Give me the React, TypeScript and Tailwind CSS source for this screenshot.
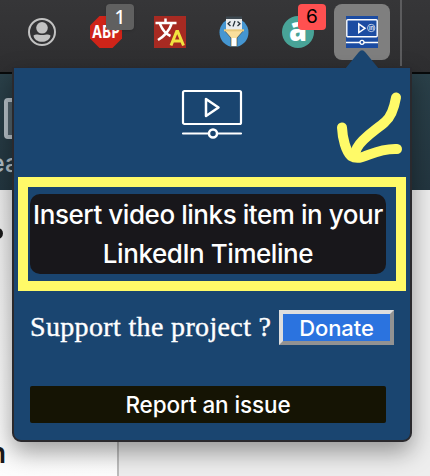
import type { ReactNode } from "react";

function Cell({ children }: { children: ReactNode }) {
  return <div className="relative flex h-14 w-16 shrink-0 items-center justify-center">{children}</div>;
}

function Toolbar() {
  return (
    <div className="flex h-[74px] w-full shrink-0 border-b-2 border-[#080a0b] bg-gradient-to-b from-[#363638] to-[#2e2e30] pl-[10px] pt-1">
      <Cell>
        <svg width="28" height="28" viewBox="0 0 28 28">
          <circle cx="14" cy="14" r="13" fill="none" stroke="#c2c2c2" strokeWidth="2" />
          <circle cx="14" cy="9.8" r="5.8" fill="#c2c2c2" />
          <path d="M5.500 17.500C8 15.500 10 17 14 17s6-1.500 8.500.500C22 21.500 18.300 23.800 14 23.800S6 21.500 5.500 17.500Z" fill="#c2c2c2" />
        </svg>
      </Cell>
      <Cell>
        <svg width="32" height="32" viewBox="0 0 32 32">
          <path d="M9.500 0h13L32 9.500v13L22.500 32h-13L0 22.500v-13Z" fill="#cf2419" />
          <text x="2.300" y="22.200" textLength="27.500" lengthAdjust="spacingAndGlyphs" fontFamily="Noto Sans, sans-serif" fontWeight="700" fontSize="17" fill="#fff">ABP</text>
        </svg>
        <span className="absolute left-8 top-0 flex h-[26px] w-7 items-center justify-center rounded bg-[#606060] font-['Noto_Sans',sans-serif] text-[19px] font-medium text-white shadow">1</span>
      </Cell>
      <Cell>
        <svg width="32" height="32" viewBox="0 0 32 32">
          <rect width="32" height="32" fill="#a72a22" />
          <path d="M11.500 2.500v4M1.500 7h21M17.500 8C15.500 14 10.500 20 4 24M6 8c2 5 6 10 10.500 12" fill="none" stroke="#fff" strokeWidth="2.500" />
          <path d="M17 29.500 22.700 15.500h1L29.500 29.500M19 25h8.500" fill="none" stroke="#f1e43f" strokeWidth="3" />
        </svg>
      </Cell>
      <Cell>
        <svg width="32" height="32" viewBox="0 0 32 32">
          <circle cx="16" cy="16.500" r="14.500" fill="#4596d1" />
          <path d="M8 1h16v15H8Z" fill="#e9ecee" />
          <path d="M8 .5h16v2.500H8Z" fill="#3d4850" />
          <path d="m12.500 5.500-2.500 2.300 2.500 2.300m7-4.600L22 7.800l-2.500 2.300M17 5l-2 5.500" fill="none" stroke="#26323a" strokeWidth="1.300" />
          <path d="M6.500 14.500h19L19 22v8.500h-6V22Z" fill="#fadf9c" stroke="#3d4c54" strokeWidth=".7" />
          <path d="M6 13.300h20v2H6Z" fill="#eaca7c" />
          <path d="M13.700 22h4.600v8h-4.600Z" fill="#fff" />
        </svg>
      </Cell>
      <Cell>
        <svg width="32" height="32" viewBox="0 0 32 32">
          <circle cx="16" cy="16" r="16" fill="#48a397" />
          <text x="7" y="25" textLength="18" lengthAdjust="spacingAndGlyphs" fontFamily="Open Sans, sans-serif" fontWeight="800" fontSize="33" fill="#fff">a</text>
        </svg>
        <span className="absolute left-8 top-0 flex h-[26px] w-7 items-center justify-center rounded bg-[#ff5050] pt-px font-['Inter',sans-serif] text-[19px] text-black">6</span>
      </Cell>
      <Cell>
        <div className="flex h-14 w-14 items-center justify-center rounded-lg bg-[#7f7f7f]">
          <svg width="32" height="32" viewBox="0 0 32 32">
            <rect width="32" height="32" fill="#1c4ca2" />
            <rect x=".8" y="3.700" width="30.400" height="17" rx="1" fill="none" stroke="#fff" strokeWidth="1.400" />
            <path d="M12.800 8v8.500L19 12.300Z" fill="none" stroke="#fff" strokeWidth="1.500" />
            <circle cx="25.200" cy="12" r="3.700" fill="none" stroke="#c7d4e8" strokeWidth=".9" />
            <text x="22.900" y="14.200" fontFamily="Inter, sans-serif" fontWeight="700" fontSize="5.500" fill="#dbe4f2">in</text>
            <path d="M0 26.500h32" stroke="#fff" strokeWidth="1.500" />
            <circle cx="16" cy="26.300" r="2" fill="#1c4ca2" stroke="#fff" strokeWidth="1.300" />
          </svg>
        </div>
      </Cell>
      <div className="-mt-1 ml-1.5 h-[66px] w-0.5 bg-[#5c5c5e]" />
    </div>
  );
}

function Page() {
  return (
    <>
      <div className="flex h-[116px] w-full shrink-0 flex-col overflow-hidden bg-gradient-to-b from-[#2a4049] to-[#233640] pt-[24px]">
        <div className="ml-1 h-[41px] w-8 rounded-sm border-4 border-[#b5bfc6] bg-[#50616a]" />
        <div className="-ml-[10px] mt-[7px] font-['Inter',sans-serif] text-[25px] font-medium leading-[34px] text-[#b1bec5]">ea</div>
      </div>
      <div className="flex w-full flex-1 overflow-hidden">
        <div className="flex w-[119px] flex-col border-r-2 border-[#bdbdbd] bg-gradient-to-b from-[#ececec] to-[#fdfdfd] pt-[38px]">
          <div className="-ml-2 h-[11px] w-[11px] rounded-full bg-[#191919]" />
          <div className="-ml-[11px] mt-[194px] font-['Inter',sans-serif] text-[28px] font-semibold leading-[40px] text-[#191919]">n</div>
        </div>
        <div className="flex-1 bg-[#eeeeee]" />
      </div>
    </>
  );
}

function VideoIcon() {
  return (
    <svg width="62" height="50" viewBox="0 0 62 50" className="mx-auto block" fill="none" stroke="#fff" strokeWidth="2.200" strokeLinejoin="round" strokeLinecap="round">
      <rect x="2" y="2" width="58" height="33" rx="1.500" />
      <path d="M25 10v17l12.500-8.500Z" strokeWidth="2.500" />
      <path d="M2 44.500h25.500M36.500 44.500H60" />
      <circle cx="32" cy="44.500" r="4" strokeWidth="2.500" />
    </svg>
  );
}

function Popup() {
  return (
    <div className="absolute left-3 top-[67px] flex h-[375px] w-[400px] flex-col rounded-b-[9px] border-x-2 border-b-2 border-t border-[#2a292d] bg-[#1a4570] pt-[21px] shadow-[0_10px_24px_rgba(0,0,0,0.38)]">
      <svg width="36" height="20" viewBox="0 0 36 20" className="absolute -top-[19px] left-[330px]">
        <path d="M1 20 14.500 3.500Q18-1 21.500 3.500L35 20Z" fill="#1a4570" />
      </svg>
      <VideoIcon />
      <div className="ml-1 mt-[38px] h-[114px] w-[388px] shrink-0 border-[10px] border-[#fffa68] pl-0.5 pt-[7px]">
        <button className="block h-20 w-[356px] whitespace-nowrap rounded-[10px] bg-[#18171b] font-['Inter',sans-serif] text-[26px] font-medium leading-[39px] tracking-[-0.44px] text-white">
          <span className="block">Insert video links item in your</span>
          <span className="block">LinkedIn Timeline</span>
        </button>
      </div>
      <div className="flex pl-4 pt-[19px]">
        <span className="w-[249px] shrink-0 whitespace-nowrap font-['Liberation_Serif',serif] text-[28px] leading-[34px] tracking-[0.35px] text-white [-webkit-text-stroke:0.4px_white]">Support the project ?</span>
        <button className="h-[35px] w-[115px] shrink-0 border-4 border-b-[#929292] border-l-[#dedede] border-r-[#929292] border-t-[#dedede] bg-[#2b73df] pt-px font-['Inter',sans-serif] text-[22px] font-medium leading-[27px] tracking-[-0.1px] text-white">Donate</button>
      </div>
      <button className="ml-4 mt-[41px] h-[37px] w-[356px] shrink-0 rounded-[2px] bg-[#151404] pt-px font-['Inter',sans-serif] text-[22.500px] font-medium leading-[36px] tracking-[-0.1px] text-white">Report an issue</button>
      <svg width="70" height="76" viewBox="0 0 70 76" className="absolute left-[320px] top-[22px]" fill="none" stroke="#fffa68" strokeWidth="10" strokeLinecap="round" strokeLinejoin="round">
        <path d="M62 7.500C60 19 57 27 51 32C42 40 28 48 23 58L20 66" />
        <path d="M8 37.500C8.500 49 12 61 17 66C28 73 38 58 63 59" />
      </svg>
    </div>
  );
}

export default function App() {
  return (
    <div className="relative flex h-[476px] w-[430px] flex-col overflow-hidden bg-[#eeeeee]">
      <Toolbar />
      <Page />
      <Popup />
    </div>
  );
}
